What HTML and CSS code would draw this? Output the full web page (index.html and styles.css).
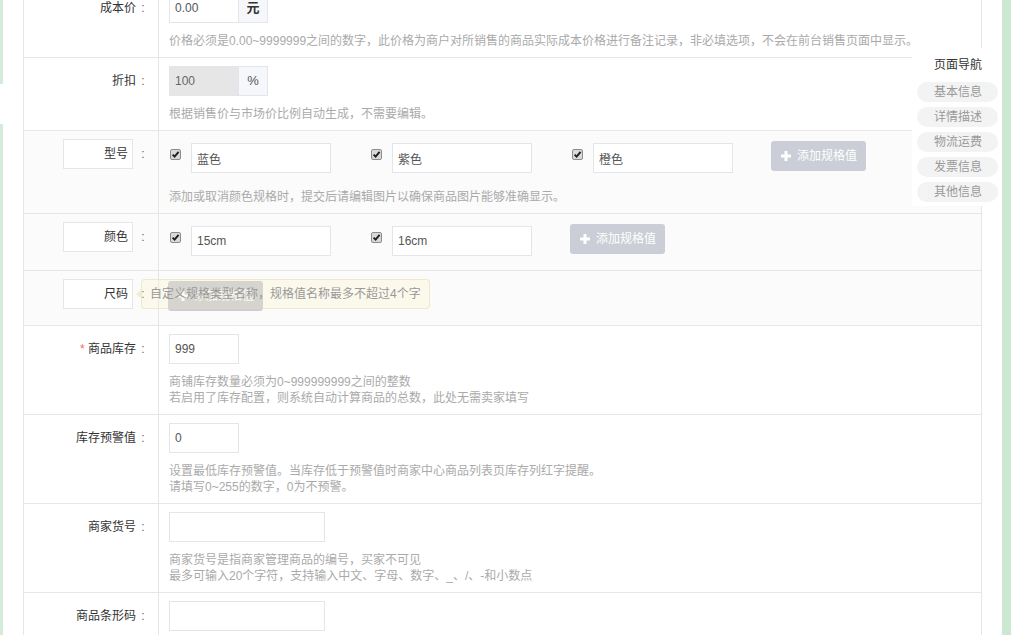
FILE: index.html
```html
<!DOCTYPE html>
<html lang="zh-CN">
<head>
<meta charset="utf-8">
<title>发布商品 - 价格与库存</title>
<link rel="stylesheet" href="styles.css">
</head>
<body>
<div class="page">
  <aside class="side-strip">
    <span class="strip-top"></span>
    <span class="strip-rest"></span>
  </aside>

  <main class="form-table">
    <div class="form-row">
      <div class="form-label">成本价<span class="colon">:</span></div>
      <div class="form-value">
        <div class="input-group">
          <input class="text-input" type="text" value="0.00">
          <span class="addon addon-strong">元</span>
        </div>
        <p class="hint">价格必须是0.00~9999999之间的数字，此价格为商户对所销售的商品实际成本价格进行备注记录，非必填选项，不会在前台销售页面中显示。</p>
      </div>
    </div>

    <div class="form-row">
      <div class="form-label">折扣<span class="colon">:</span></div>
      <div class="form-value">
        <div class="input-group">
          <input class="text-input is-disabled" type="text" value="100" disabled>
          <span class="addon">%</span>
        </div>
        <p class="hint">根据销售价与市场价比例自动生成，不需要编辑。</p>
      </div>
    </div>

    <div class="form-row alt">
      <div class="form-label spec-label">
        <input class="name-input" type="text" value="型号"><span class="colon">:</span>
      </div>
      <div class="form-value">
        <div class="spec-list">
          <label class="spec-item">
            <span class="check"><svg width="11" height="11" viewBox="0 0 11 11"><rect x=".5" y=".5" width="10" height="10" rx="1.5" fill="#d9d9d9" stroke="#8c8c8c"/><path d="M2.6 5.6l2 2L8.6 2.8" fill="none" stroke="#1e1e1e" stroke-width="1.9"/></svg></span>
            <input class="text-input spec-input" type="text" value="蓝色">
          </label>
          <label class="spec-item">
            <span class="check"><svg width="11" height="11" viewBox="0 0 11 11"><rect x=".5" y=".5" width="10" height="10" rx="1.5" fill="#d9d9d9" stroke="#8c8c8c"/><path d="M2.6 5.6l2 2L8.6 2.8" fill="none" stroke="#1e1e1e" stroke-width="1.9"/></svg></span>
            <input class="text-input spec-input" type="text" value="紫色">
          </label>
          <label class="spec-item">
            <span class="check"><svg width="11" height="11" viewBox="0 0 11 11"><rect x=".5" y=".5" width="10" height="10" rx="1.5" fill="#d9d9d9" stroke="#8c8c8c"/><path d="M2.6 5.6l2 2L8.6 2.8" fill="none" stroke="#1e1e1e" stroke-width="1.9"/></svg></span>
            <input class="text-input spec-input" type="text" value="橙色">
          </label>
          <button class="btn-add" type="button"><svg width="10" height="10" viewBox="0 0 10 10"><path d="M3.5 0h3v3.5H10v3H6.5V10h-3V6.5H0v-3h3.5z" fill="#fff"/></svg>添加规格值</button>
        </div>
        <p class="hint">添加或取消颜色规格时，提交后请编辑图片以确保商品图片能够准确显示。</p>
      </div>
    </div>

    <div class="form-row alt">
      <div class="form-label spec-label">
        <input class="name-input" type="text" value="颜色"><span class="colon">:</span>
      </div>
      <div class="form-value">
        <div class="spec-list">
          <label class="spec-item">
            <span class="check"><svg width="11" height="11" viewBox="0 0 11 11"><rect x=".5" y=".5" width="10" height="10" rx="1.5" fill="#d9d9d9" stroke="#8c8c8c"/><path d="M2.6 5.6l2 2L8.6 2.8" fill="none" stroke="#1e1e1e" stroke-width="1.9"/></svg></span>
            <input class="text-input spec-input" type="text" value="15cm">
          </label>
          <label class="spec-item">
            <span class="check"><svg width="11" height="11" viewBox="0 0 11 11"><rect x=".5" y=".5" width="10" height="10" rx="1.5" fill="#d9d9d9" stroke="#8c8c8c"/><path d="M2.6 5.6l2 2L8.6 2.8" fill="none" stroke="#1e1e1e" stroke-width="1.9"/></svg></span>
            <input class="text-input spec-input" type="text" value="16cm">
          </label>
          <button class="btn-add" type="button"><svg width="10" height="10" viewBox="0 0 10 10"><path d="M3.5 0h3v3.5H10v3H6.5V10h-3V6.5H0v-3h3.5z" fill="#fff"/></svg>添加规格值</button>
        </div>
      </div>
    </div>

    <div class="form-row alt">
      <div class="form-label spec-label">
        <input class="name-input" type="text" value="尺码"><span class="colon">:</span>
      </div>
      <div class="form-value">
        <div class="spec-list">
          <button class="btn-add" type="button"><svg width="10" height="10" viewBox="0 0 10 10"><path d="M3.5 0h3v3.5H10v3H6.5V10h-3V6.5H0v-3h3.5z" fill="#fff"/></svg>添加规格值</button>
        </div>
      </div>
      <div class="tip">自定义规格类型名称，规格值名称最多不超过4个字</div>
    </div>

    <div class="form-row">
      <div class="form-label"><span class="required">*</span> 商品库存<span class="colon">:</span></div>
      <div class="form-value">
        <input class="text-input" type="text" value="999">
        <p class="hint">商铺库存数量必须为0~999999999之间的整数<br>若启用了库存配置，则系统自动计算商品的总数，此处无需卖家填写</p>
      </div>
    </div>

    <div class="form-row">
      <div class="form-label">库存预警值<span class="colon">:</span></div>
      <div class="form-value">
        <input class="text-input" type="text" value="0">
        <p class="hint">设置最低库存预警值。当库存低于预警值时商家中心商品列表页库存列红字提醒。<br>请填写0~255的数字，0为不预警。</p>
      </div>
    </div>

    <div class="form-row">
      <div class="form-label">商家货号<span class="colon">:</span></div>
      <div class="form-value">
        <input class="text-input wide" type="text" value="">
        <p class="hint">商家货号是指商家管理商品的编号，买家不可见<br>最多可输入20个字符，支持输入中文、字母、数字、_、/、-和小数点</p>
      </div>
    </div>

    <div class="form-row">
      <div class="form-label">商品条形码<span class="colon">:</span></div>
      <div class="form-value">
        <input class="text-input wide" type="text" value="">
      </div>
    </div>
  </main>

  <div class="rail"></div>
</div>

<nav class="page-nav">
  <h3>页面导航</h3>
  <a href="#base">基本信息</a>
  <a href="#detail">详情描述</a>
  <a href="#freight">物流运费</a>
  <a href="#invoice">发票信息</a>
  <a href="#other">其他信息</a>
</nav>
</body>
</html>
```

FILE: styles.css
```css
* {
  box-sizing: border-box;
}

html,
body {
  margin: 0;
  height: 100%;
  overflow: hidden;
  background: #fff;
}

body {
  font-family: "Liberation Sans", "Noto Sans CJK SC", sans-serif;
  font-size: 12px;
  line-height: 1.5;
  color: #333;
}

/* page frame: thin green sidebar edge, form table, green rail */
.page {
  display: flex;
  align-items: stretch;
  min-height: 100%;
}

.side-strip {
  width: 3px;
  display: flex;
  flex-direction: column;
}

.strip-top {
  height: 84px;
  background: #d4ebd8;
}

.strip-rest {
  flex: 1;
  margin-top: 40px;
  background: #d4ebd8;
}

.rail {
  width: 9px;
  margin-left: 20px;
  background: #cde8d0;
}

.form-table {
  width: 959px;
  margin: -15px 0 0 20px;
  align-self: flex-start;
  border-left: 1px solid #e6e6e6;
  border-right: 1px solid #e6e6e6;
}

/* rows */
.form-row {
  position: relative;
  display: grid;
  grid-template-columns: 135px 1fr;
  border-bottom: 1px solid #e6e6e6;
}

.form-row.alt {
  background: #fbfbfb;
}

.form-label {
  border-right: 1px solid #e6e6e6;
  padding: 8px 8px 8px 0;
  text-align: right;
  line-height: 30px;
  color: #333;
  white-space: nowrap;
}

.colon {
  display: inline-block;
  width: 14px;
  text-align: center;
  color: #666;
}

.required {
  color: #f36d6d;
}

.spec-label {
  display: flex;
  justify-content: flex-end;
  align-items: flex-start;
  gap: 3px;
}

.name-input {
  width: 70px;
  height: 30px;
  border: 1px solid #e6e6e6;
  background: #fff;
  padding: 0 4px;
  text-align: right;
  font: inherit;
  font-size: 12px;
  color: #333;
  outline: none;
}

.form-value {
  padding: 8px 10px;
  min-width: 0;
}

.hint {
  margin: 10px 0 0;
  font-size: 12px;
  line-height: 16px;
  color: #aaa;
  white-space: nowrap;
}

/* inputs */
.text-input {
  display: block;
  width: 70px;
  height: 30px;
  border: 1px solid #e3e5ea;
  background: #fff;
  padding: 0 5px;
  font: inherit;
  font-size: 12px;
  color: #555;
  outline: none;
}

.text-input.wide {
  width: 156px;
}

.text-input.is-disabled {
  background: #e6e6e6;
  color: #666;
}

.input-group {
  display: flex;
}

.addon {
  width: 29px;
  height: 30px;
  border: 1px solid #e3e5ea;
  border-left: none;
  background: #f6f7fa;
  display: flex;
  align-items: center;
  justify-content: center;
  font-size: 13px;
  color: #555;
}

.addon-strong {
  font-weight: bold;
  color: #333;
}

/* spec values */
.spec-list {
  display: flex;
  align-items: flex-start;
  gap: 0 39px;
}

.spec-item {
  display: flex;
  align-items: flex-start;
  margin: 4px 0 6px;
}

.check {
  display: block;
  width: 11px;
  height: 11px;
  margin: 6px 10px 0 1px;
}

.check svg {
  display: block;
}

.spec-input {
  width: 140px;
}

.btn-add {
  display: inline-flex;
  align-items: center;
  gap: 6px;
  height: 30px;
  margin: 2px 0 6px -1px;
  padding: 0 9px 0 10px;
  border: none;
  border-radius: 3px;
  background: #cbced6;
  color: #fff;
  font: inherit;
  font-size: 12px;
  cursor: pointer;
}

.btn-add svg {
  display: block;
}

/* tooltip over the spec name */
.tip {
  position: absolute;
  left: 117px;
  top: 8px;
  height: 30px;
  padding: 0 8px;
  line-height: 28px;
  border: 1px solid rgba(232, 218, 165, 0.55);
  border-radius: 4px;
  background: rgba(255, 240, 180, 0.2);
  color: #999;
  white-space: nowrap;
}

.tip::before {
  content: "";
  position: absolute;
  left: -6px;
  top: 9px;
  border-style: solid;
  border-width: 5px 6px 5px 0;
  border-color: transparent rgba(240, 232, 200, 0.8) transparent transparent;
}

/* floating page navigation */
.page-nav {
  position: absolute;
  top: 48px;
  left: 912px;
  width: 90px;
  padding: 8px 4px 4px 5px;
  background: #fff;
}

.page-nav h3 {
  margin: 0 16px 8px 0;
  font-size: 12px;
  font-weight: normal;
  line-height: 18px;
  text-align: right;
  color: #333;
}

.page-nav a {
  display: block;
  height: 20px;
  margin-bottom: 5px;
  padding-right: 16px;
  border-radius: 10px;
  background: #f3f3f3;
  line-height: 20px;
  text-align: right;
  color: #999;
  text-decoration: none;
}

.page-nav a:last-child {
  margin-bottom: 0;
}
```
